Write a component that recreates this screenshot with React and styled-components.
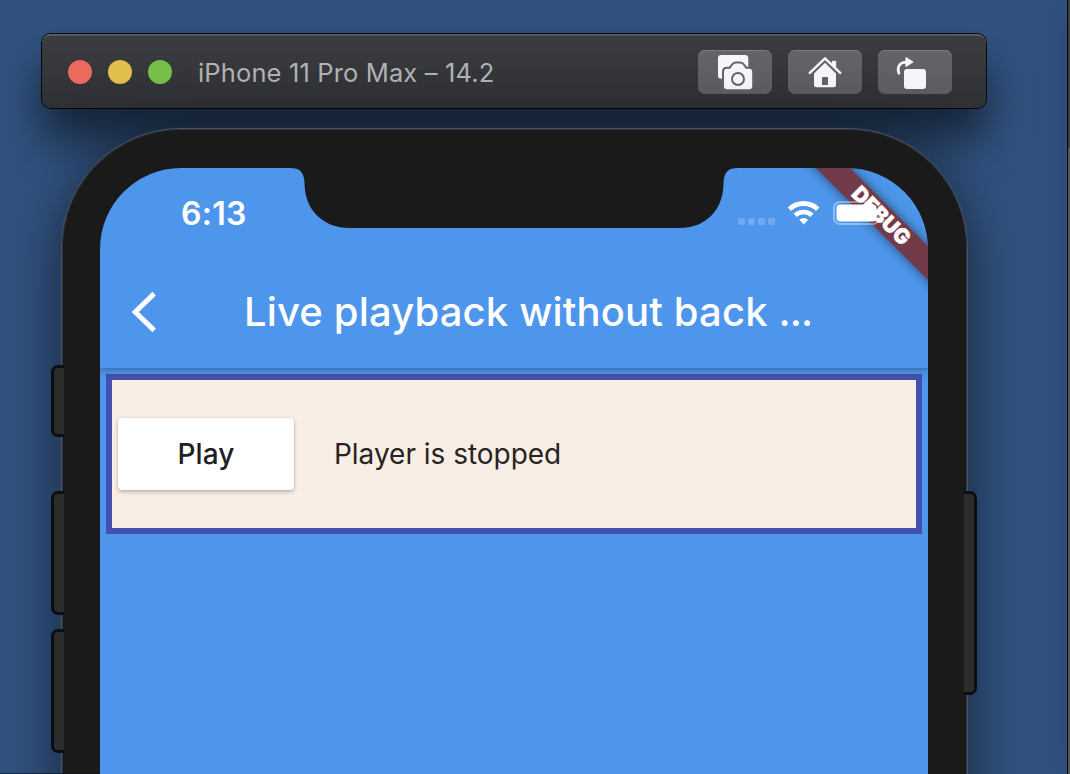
import React from "react";
import styled, { createGlobalStyle } from "styled-components";

const GlobalStyle = createGlobalStyle`
  * { box-sizing: border-box; }
  html, body { margin: 0; padding: 0; overflow: hidden; }
  body { font-family: Inter, "Liberation Sans", sans-serif; }
`;

const Desktop = styled.main`
  position: relative;
  width: 1070px;
  height: 774px;
  overflow: hidden;
  padding: 34px 0 0 42px;
  background: #31527f;
`;

const NextWindow = styled.aside`
  position: absolute;
  top: 0;
  right: 0;
  width: 3px;
  height: 100%;
  border-left: 1px solid #05080c;
  background: linear-gradient(#3b3c3e 148px, #555657 148px);
  box-shadow: 0 0 36px 2px rgba(0, 0, 0, 0.32);
`;

const LowerWindow = styled.div`
  position: absolute;
  left: 0;
  bottom: 0;
  width: 100px;
  height: 1px;
  background: rgba(15, 16, 28, 0.7);
`;

const TitleBar = styled.header`
  display: flex;
  align-items: center;
  width: 944px;
  height: 74px;
  padding: 0 34px 0 26px;
  border-radius: 9px;
  background: linear-gradient(#3c3d40, #2f3033);
  box-shadow: 0 0 0 1px #05070a, inset 0 2px 0 -0.5px #626366, 0 30px 46px 0 rgba(0, 0, 0, 0.58);
`;

const Lights = styled.div`
  display: flex;
  gap: 16px;
  margin-top: 2px;
`;

const Light = styled.span`
  width: 24px;
  height: 24px;
  border-radius: 50%;
  background: ${(p) => p.$color};
`;

const WindowTitle = styled.h1`
  flex: 1;
  margin: 3px 0 0 26px;
  font-size: 25.5px;
  font-weight: 400;
  line-height: 32px;
  letter-spacing: 0.14px;
  color: #b1b2b5;
  white-space: nowrap;
`;

const Tools = styled.div`
  display: flex;
  gap: 16px;
  margin-top: 2px;
`;

const ToolButton = styled.button`
  width: 74px;
  height: 44px;
  padding: 0;
  border: 0;
  border-radius: 7px;
  background: linear-gradient(#636467, #5c5d60);
  box-shadow: inset 0 1px 0 #7c7d80;

  svg { display: block; }
`;

const Device = styled.section`
  position: relative;
  width: 907px;
  height: 1842px;
  margin: 20px 0 0 19px;
  padding: 39px 38px;
  border: 1px solid #4a5565;
  border-radius: 120px;
  background: #1a1a1a;
  box-shadow: inset 0 0 0 1px #2b323c, 0 12px 56px 2px rgba(0, 0, 0, 0.52);
`;

const SideKey = styled.span`
  position: absolute;
  top: ${(p) => p.$top}px;
  ${(p) => p.$side}: ${(p) => (p.$side === "left" ? -11 : -10)}px;
  width: 13px;
  height: ${(p) => p.$length}px;
  border: 3px solid #0a0e13;
  border-${(p) => (p.$side === "left" ? "right" : "left")}: 0;
  border-radius: ${(p) => (p.$side === "left" ? "7px 0 0 7px" : "0 7px 7px 0")};
  background: #2c2c2c;
`;

const Screen = styled.div`
  position: relative;
  width: 828px;
  height: 1762px;
  overflow: hidden;
  border-radius: 81px;
  background: #4e96eb;
`;

const Notch = styled.svg`
  position: absolute;
  top: 0;
  left: 190px;
`;

const StatusBar = styled.div`
  position: relative;
  z-index: 3;
  display: flex;
  justify-content: space-between;
  height: 88px;
  padding: 28px 48px 0 81px;
`;

const Clock = styled.time`
  font-size: 32px;
  font-weight: 600;
  line-height: 36px;
  letter-spacing: 0.3px;
  color: #fff;
`;

const Indicators = styled.svg`
  display: block;
`;

const NavBar = styled.nav`
  position: relative;
  display: flex;
  align-items: center;
  height: 112px;
  padding-left: 30px;
  background: #4e96eb;
  box-shadow: 0 3px 8px rgba(0, 0, 0, 0.22), 0 1px 2px rgba(0, 0, 0, 0.12);
  clip-path: inset(0 0 -16px 0);
`;

const BackIcon = styled.svg`
  display: block;
  margin-right: 82px;
`;

const PageTitle = styled.h2`
  margin: 0;
  font-size: 40px;
  font-weight: 500;
  line-height: 48px;
  letter-spacing: 0.15px;
  color: #fff;
  white-space: nowrap;
`;

const Ellipsis = styled.span`
  letter-spacing: -0.9px;
`;

const Panel = styled.section`
  display: flex;
  align-items: center;
  gap: 40px;
  height: 160px;
  margin: 6px;
  padding: 0 6px;
  border: 6px solid #4351ae;
  background: #f8eee5;
`;

const PlayButton = styled.button`
  width: 176px;
  height: 72px;
  padding: 0;
  border: 0;
  border-radius: 4px;
  background: #fff;
  font-family: inherit;
  font-size: 28px;
  font-weight: 500;
  letter-spacing: 0.1px;
  color: #212121;
  box-shadow: 0 2px 4px rgba(0, 0, 0, 0.24), 0 0 3px rgba(0, 0, 0, 0.08);
`;

const PlayerStatus = styled.p`
  margin: 0;
  font-size: 28px;
  font-weight: 400;
  letter-spacing: -0.02px;
  color: #262422;
  white-space: nowrap;
`;

const Ribbon = styled.div`
  position: absolute;
  z-index: 2;
  top: 36px;
  left: 661px;
  width: 240px;
  height: 24px;
  transform: rotate(45deg);
  background: #733a49;
  box-shadow: 0 0 12px rgba(0, 0, 0, 0.5);
  font-size: 21px;
  font-weight: 900;
  line-height: 24px;
  text-align: center;
  color: #fff;
  -webkit-text-stroke: 0.4px #fff;
`;

const ScreenshotIcon = () => (
  <svg width="74" height="44" viewBox="0 0 74 44">
    <rect x="20" y="5" width="30.3" height="23.8" rx="3.2" fill="#f5f6fa" />
    <path
      d="M29 18.7h3.3l2.4-3.4q1.2-1.8 3.1-1.8h4.4q1.9 0 3.1 1.8l2.4 3.4h3.5q3 0 3 3v14.6q0 3-3 3H29q-3 0-3-3V21.7q0-3 3-3z"
      fill="#f5f6fa"
      stroke="#616265"
      strokeWidth="4"
      paintOrder="stroke"
    />
    <circle cx="40" cy="29" r="6" fill="none" stroke="#616265" strokeWidth="1.9" />
  </svg>
);

const HomeIcon = () => (
  <svg width="74" height="44" viewBox="0 0 74 44">
    <path d="M37 12.7 48 23.5V35q0 2.2-2.2 2.2H28.2Q26 37.2 26 35V23.5z" fill="#f5f6fa" />
    <path d="M21.8 22.5 37 8.4l15.2 14.1" fill="none" stroke="#616265" strokeWidth="5.5" />
    <path d="M43.8 12q0-1.2 1.2-1.2h2q1.2 0 1.2 1.2v6.6l-4.4-4z" fill="#f5f6fa" />
    <path d="M21.8 22.8 37 8.4l15.2 14.4" fill="none" stroke="#f5f6fa" strokeWidth="2.5" strokeLinecap="round" strokeLinejoin="round" />
    <path d="M34 35v-7q0-1 1-1h4q1 0 1 1v7z" fill="#616265" />
  </svg>
);

const RotateIcon = () => (
  <svg width="74" height="44" viewBox="0 0 74 44">
    <rect x="26" y="19" width="22" height="20" rx="3" fill="#f5f6fa" />
    <path d="M20.9 23.2C18.8 16.6 21.7 12.2 29 12.2" fill="none" stroke="#f5f6fa" strokeWidth="2.8" strokeLinecap="round" />
    <path d="M28 7.8 34.8 12 28 16.3z" fill="#f5f6fa" stroke="#f5f6fa" strokeWidth="1.2" strokeLinejoin="round" />
  </svg>
);

export default function App() {
  return (
    <>
      <GlobalStyle />
      <Desktop>
        <TitleBar>
          <Lights>
            <Light $color="#ec695e" />
            <Light $color="#e0c04c" />
            <Light $color="#74c048" />
          </Lights>
          <WindowTitle>iPhone 11 Pro Max – 14.2</WindowTitle>
          <Tools>
            <ToolButton aria-label="Screenshot"><ScreenshotIcon /></ToolButton>
            <ToolButton aria-label="Home"><HomeIcon /></ToolButton>
            <ToolButton aria-label="Rotate"><RotateIcon /></ToolButton>
          </Tools>
        </TitleBar>
        <Device>
          <SideKey $side="left" $top={236} $length={72} />
          <SideKey $side="left" $top={362} $length={124} />
          <SideKey $side="left" $top={500} $length={124} />
          <SideKey $side="right" $top={362} $length={204} />
          <Screen>
            <Notch width="448" height="62" viewBox="0 0 448 62">
              <path
                d="M0 0H448C438 0 434 4 433.5 15C433.5 41 417 60 389 60H60C32 60 14.5 41 14.5 15C14 4 10 0 0 0z"
                fill="#1a1a1a"
              />
            </Notch>
            <StatusBar>
              <Clock>6:13</Clock>
              <Indicators width="144" height="36" viewBox="736 196 144 36">
                <g fill="#fff" opacity="0.2">
                  <rect x="738" y="218" width="7" height="7" rx="2" />
                  <rect x="748" y="218" width="7" height="7" rx="2" />
                  <rect x="758" y="218" width="7" height="7" rx="2" />
                  <rect x="768" y="218" width="7" height="7" rx="2" />
                </g>
                <g fill="none" stroke="#fff" strokeWidth="5">
                  <path d="M789.5 209.2a20.5 20.5 0 0 1 28.2 0" />
                  <path d="M795.2 215.3a12.3 12.3 0 0 1 16.8 0" strokeWidth="4.6" />
                </g>
                <path d="M799.3 219.8q4.4-3.6 8.8 0l-4.4 4.8z" fill="#fff" />
                <rect x="834" y="202" width="45" height="22" rx="6" fill="none" stroke="#fff" strokeOpacity="0.38" strokeWidth="2" />
                <rect x="836.5" y="204.5" width="40" height="17" rx="4" fill="#fff" />
              </Indicators>
            </StatusBar>
            <NavBar>
              <BackIcon width="32" height="48" viewBox="0 0 32 48">
                <path d="M24.2 5.6 5.2 24l19 18.4" fill="none" stroke="#fff" strokeWidth="5" />
              </BackIcon>
              <PageTitle>
                Live playback without back <Ellipsis>...</Ellipsis>
              </PageTitle>
            </NavBar>
            <Panel>
              <PlayButton>Play</PlayButton>
              <PlayerStatus>Player is stopped</PlayerStatus>
            </Panel>
            <Ribbon>DEBUG</Ribbon>
          </Screen>
        </Device>
        <NextWindow />
        <LowerWindow />
      </Desktop>
    </>
  );
}
